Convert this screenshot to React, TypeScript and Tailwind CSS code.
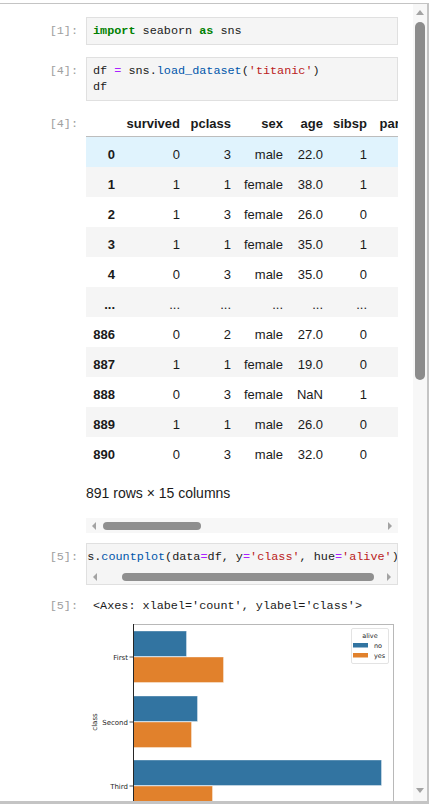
import React from 'react';

const mono = "font-['Liberation_Mono','DejaVu_Sans_Mono',monospace] text-[11.8px]";
const sans = "font-['Liberation_Sans',Arial,sans-serif]";

const rows: string[][] = [
  ['0', '0', '3', 'male', '22.0', '1', '0'],
  ['1', '1', '1', 'female', '38.0', '1', '0'],
  ['2', '1', '3', 'female', '26.0', '0', '0'],
  ['3', '1', '1', 'female', '35.0', '1', '0'],
  ['4', '0', '3', 'male', '35.0', '0', '0'],
  ['...', '...', '...', '...', '...', '...', '...'],
  ['886', '0', '2', 'male', '27.0', '0', '0'],
  ['887', '1', '1', 'female', '19.0', '0', '0'],
  ['888', '0', '3', 'female', 'NaN', '1', '2'],
  ['889', '1', '1', 'male', '26.0', '0', '0'],
  ['890', '0', '3', 'male', '32.0', '0', '0'],
];

const headers = ['', 'survived', 'pclass', 'sex', 'age', 'sibsp', 'parch'];
const colW = ['w-[29px]', 'w-[65px]', 'w-[51px]', 'w-[52px]', 'w-[40px]', 'w-[44px]', 'w-[48px]'];

function Prompt({ n, className = '' }: { n: number; className?: string }) {
  return (
    <div className={`w-[86px] shrink-0 pr-[8px] text-right text-[#a0a0a0] ${mono} ${className}`}>
      [{n}]:
    </div>
  );
}

function Arrow({ dir }: { dir: 'left' | 'right' | 'up' | 'down' }) {
  const pts = {
    left: '4,0 4,8 0,4',
    right: '0,0 0,8 4,4',
    up: '0,5 8,5 4,0',
    down: '0,0 8,0 4,5',
  }[dir];
  const horiz = dir === 'left' || dir === 'right';
  return (
    <svg width={horiz ? 4 : 8} height={horiz ? 8 : 5} className="block shrink-0">
      <polygon points={pts} fill="#a3a3a3" />
    </svg>
  );
}

function HScroll({ thumbLeft, thumbW }: { thumbLeft: string; thumbW: string }) {
  return (
    <div className="flex h-[15px] items-center px-[6px]">
      <Arrow dir="left" />
      <div className={`h-[8px] rounded-full bg-[#8f8f8f] ${thumbLeft} ${thumbW}`} />
      <div className="ml-auto">
        <Arrow dir="right" />
      </div>
    </div>
  );
}

function Chart() {
  const blue = '#3274a1';
  const orange = '#e1812c';
  const bars = [
    { y: 15, w: 53, c: blue },
    { y: 41, w: 90, c: orange },
    { y: 80, w: 64, c: blue },
    { y: 106, w: 58, c: orange },
    { y: 144, w: 248, c: blue },
    { y: 170, w: 79, c: orange },
  ];
  const ticks = [
    { y: 41, t: 'First' },
    { y: 106, t: 'Second' },
    { y: 170, t: 'Third' },
  ];
  return (
    <svg width="312" height="200" className="block" fontFamily="'DejaVu Sans','Liberation Sans',sans-serif">
      <rect x="47.5" y="8.5" width="260" height="220" fill="#fff" stroke="#b8b8b8" />
      {bars.map((b, i) => (
        <rect key={i} x="47.5" y={b.y} width={b.w} height="25.5" fill={b.c} stroke="#ffffff" strokeOpacity="0.6" strokeWidth="0.6" />
      ))}
      <line x1="47.5" y1="8" x2="47.5" y2="200" stroke="#262626" strokeWidth="1" />
      {ticks.map((k) => (
        <g key={k.t}>
          <line x1="43.5" y1={k.y} x2="47.5" y2={k.y} stroke="#262626" strokeWidth="0.8" />
          <text x="42" y={k.y + 2.5} fontSize="7" textAnchor="end" fill="#262626">
            {k.t}
          </text>
        </g>
      ))}
      <text x="11" y="106" fontSize="7" textAnchor="middle" fill="#262626" transform="rotate(-90 11 106)">
        class
      </text>
      <rect x="265.5" y="12.5" width="37" height="35" rx="1.5" fill="#fff" stroke="#dcdcdc" strokeWidth="0.8" />
      <text x="284" y="21.5" fontSize="6.5" textAnchor="middle" fill="#262626">
        alive
      </text>
      <rect x="267" y="27" width="15" height="4.5" fill={blue} />
      <text x="288" y="32" fontSize="6.5" fill="#262626">
        no
      </text>
      <rect x="267" y="37" width="15" height="4.5" fill={orange} />
      <text x="288" y="42" fontSize="6.5" fill="#262626">
        yes
      </text>
    </svg>
  );
}

export default function App() {
  return (
    <div className="h-[804px] w-[429px] overflow-hidden bg-white pt-[3px]">
      <div className="flex h-[801px] border-t border-r-2 border-b-[3px] border-[#c4c4c4]">
        {/* notebook */}
        <div className="flex-1 overflow-hidden pt-[13px]">
          {/* [1] */}
          <div className="flex">
            <Prompt n={1} className="pt-[6px] leading-[16px]" />
            <div className={`w-[312px] border border-[#e0e0e0] bg-[#f5f5f5] px-[6px] py-[5px] leading-[16px] text-[#1a1a1a] ${mono}`}>
              <span className="font-bold text-[#008000]">import</span> seaborn <span className="font-bold text-[#008000]">as</span> sns
            </div>
          </div>

          {/* [4] */}
          <div className="mt-[12px] flex">
            <Prompt n={4} className="pt-[6px] leading-[16px]" />
            <div className={`w-[312px] border border-[#e0e0e0] bg-[#f5f5f5] px-[6px] py-[5px] leading-[16px] text-[#1a1a1a] ${mono}`}>
              <div>
                df <span className="text-[#aa22ff]">=</span> sns.<span className="text-[#0055aa]">load_dataset</span>(
                <span className="text-[#ba2121]">'titanic'</span>)
              </div>
              <div>df</div>
            </div>
          </div>

          {/* [4] output */}
          <div className="mt-[10px] flex">
            <Prompt n={4} className="pt-[3px] leading-[20px]" />
            <div className={`w-[312px] overflow-hidden text-[13px] text-[#1a1a1a] ${sans}`}>
              <div className="w-[329px]">
                <div className="flex h-[26px] border-b border-[#bdbdbd] pt-[3px] font-bold leading-[20px]">
                  {headers.map((h, i) => (
                    <div key={i} className={`shrink-0 text-right ${colW[i]}`}>
                      {h}
                    </div>
                  ))}
                </div>
                {rows.map((r, ri) => (
                  <div
                    key={ri}
                    className={`flex h-[30px] pt-[8px] leading-[20px] ${
                      ri === 0 ? 'bg-[#e0f3fd]' : ri % 2 === 1 ? 'bg-[#f5f5f5]' : 'bg-white'
                    }`}
                  >
                    {r.map((v, ci) => (
                      <div key={ci} className={`shrink-0 text-right ${colW[ci]} ${ci === 0 ? 'font-bold' : ''}`}>
                        {v}
                      </div>
                    ))}
                  </div>
                ))}
              </div>
              <div className="mt-[16px] text-[14px] leading-[20px]">891 rows × 15 columns</div>
              <div className="mt-[15px] bg-[#f7f7f7]">
                <HScroll thumbLeft="ml-[7px]" thumbW="w-[98px]" />
              </div>
            </div>
          </div>

          {/* [5] */}
          <div className="mt-[10px] flex">
            <Prompt n={5} className="pt-[6px] leading-[16px]" />
            <div className="w-[312px] overflow-hidden border border-[#e0e0e0] bg-[#f5f5f5]">
              <div className={`ml-[-14px] whitespace-nowrap pt-[5px] leading-[16px] text-[#1a1a1a] ${mono}`}>
                sns.<span className="text-[#0055aa]">countplot</span>(data<span className="text-[#aa22ff]">=</span>df, y
                <span className="text-[#aa22ff]">=</span>
                <span className="text-[#ba2121]">'class'</span>, hue<span className="text-[#aa22ff]">=</span>
                <span className="text-[#ba2121]">'alive'</span>)
              </div>
              <div className="mt-[4px]">
                <HScroll thumbLeft="ml-[25px]" thumbW="w-[252px]" />
              </div>
            </div>
          </div>

          {/* [5] output */}
          <div className="mt-[13px] flex">
            <Prompt n={5} className="leading-[16px]" />
            <div className="w-[312px]">
              <div className={`pl-[7px] leading-[16px] text-[#1a1a1a] ${mono}`}>
                &lt;Axes: xlabel='count', ylabel='class'&gt;
              </div>
              <div className="mt-[2px]">
                <Chart />
              </div>
            </div>
          </div>
        </div>

        {/* vertical scrollbar */}
        <div className="flex w-[14px] shrink-0 flex-col items-center bg-[#f7f7f7] pt-[6px] pb-[8px]">
          <Arrow dir="up" />
          <div className="mt-[7px] h-[358px] w-[10px] rounded-full bg-[#8c8c8c]" />
          <div className="mt-auto">
            <Arrow dir="down" />
          </div>
        </div>
      </div>
    </div>
  );
}
